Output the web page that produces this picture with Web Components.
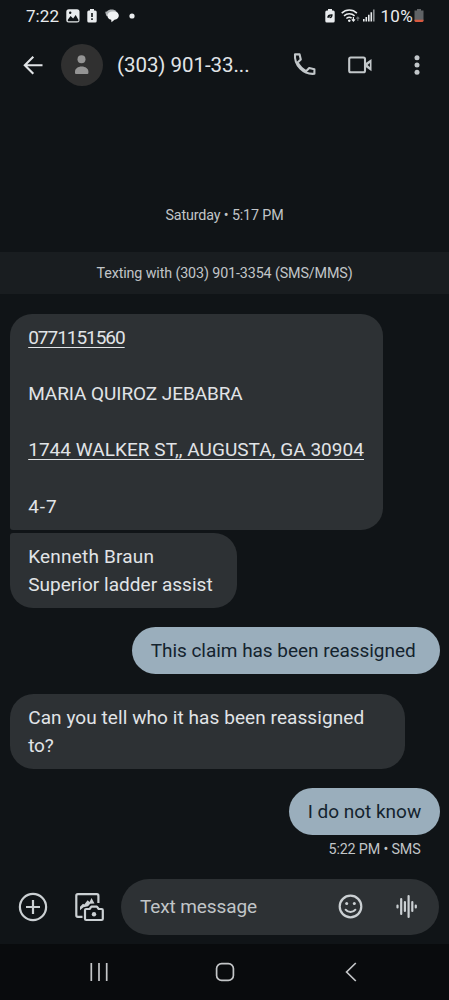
<!DOCTYPE html>
<html lang="en">
<head>
<meta charset="utf-8">
<title>Messages</title>
<style>
html,body{margin:0;padding:0;background:#101417}
body{width:449px;height:1000px;overflow:hidden;font-family:Roboto,"Liberation Sans",sans-serif}
</style>
</head>
<body>
<phone-screen>
  <status-bar slot="top"></status-bar>
  <chat-header slot="top"><fit-text w="132.5">(303) 901-33...</fit-text></chat-header>
  <date-line><fit-text w="118">Saturday • 5:17 PM</fit-text></date-line>
  <info-band><fit-text w="256">Texting with (303) 901-3354 (SMS/MMS)</fit-text></info-band>
  <chat-bubble style="--w:373px;--r:22px 22px 22px 3px;--mt:19.6px">
    <fit-text w="96.5" link>0771151560</fit-text><br><br>
    <fit-text w="214.5">MARIA QUIROZ JEBABRA</fit-text><br><br>
    <fit-text w="335.8" link>1744 WALKER ST,, AUGUSTA, GA 30904</fit-text><br><br>
    <fit-text w="29.5">4-7</fit-text>
  </chat-bubble>
  <chat-bubble style="--w:227px;--r:3px 23px 23px 23px;--mt:2.8px">
    <fit-text w="126">Kenneth Braun</fit-text><br>
    <fit-text w="184.5">Superior ladder assist</fit-text>
  </chat-bubble>
  <chat-bubble out style="--w:307.5px;--mt:19px"><fit-text w="265">This claim has been reassigned</fit-text></chat-bubble>
  <chat-bubble style="--w:395.5px;--mt:19.2px">
    <fit-text w="336">Can you tell who it has been reassigned</fit-text><br>
    <fit-text w="25.5">to?</fit-text>
  </chat-bubble>
  <chat-bubble out style="--w:150.5px;--mt:19.2px"><fit-text w="113.5">I do not know</fit-text></chat-bubble>
  <sent-meta><fit-text w="92">5:22 PM • SMS</fit-text></sent-meta>
  <compose-bar slot="bottom"><fit-text w="117">Text message</fit-text></compose-bar>
  <nav-bar slot="bottom"></nav-bar>
</phone-screen>
<script>
const define = (name, html, extra) => customElements.define(name, class extends HTMLElement {
  constructor() {
    super();
    const t = document.createElement('template');
    t.innerHTML = html;
    this.attachShadow({mode: 'open'}).append(t.content.cloneNode(true));
  }
  connectedCallback() { if (extra) extra(this); }
});

define('phone-screen', `<style>
:host{display:flex;flex-direction:column;width:449px;height:1000px;background:#101417;color:#e1e4e7}
main{flex:1;min-height:0;display:flex;flex-direction:column}
</style><slot name="top"></slot><main><slot></slot></main><slot name="bottom"></slot>`);

define('status-bar', `<style>
:host{display:flex;align-items:center;height:31px;box-sizing:border-box;padding:0 25px 0 26px;font-size:17px;color:#e9ecee}
svg{display:block;flex:none}
.g{flex:1}
</style>
<fit-text w="33">7:22</fit-text>
<svg style="margin-left:7px" width="14" height="14" viewBox="0 0 14 14"><rect x=".3" y=".3" width="13.2" height="13.2" rx="2.5" fill="#e9ecee"/><path d="M1.8 10.7 4.6 7l2.5 2.4 2.6-3.5 2.7 4.8v1.5H1.8z" fill="#101417"/><circle cx="4.2" cy="3.7" r="1.2" fill="#101417"/></svg>
<svg style="margin-left:7px" width="10" height="14" viewBox="0 0 10 14"><path d="M3 0h4v1.4h1.2q1.5 0 1.5 1.5v9q0 1.6-1.5 1.6H1.8Q.3 13.5.3 11.9v-9q0-1.5 1.5-1.5H3z" fill="#e9ecee"/><path d="M4.2 4h1.6v4H4.2zM4.2 9.3h1.6v1.6H4.2z" fill="#101417"/></svg>
<svg style="margin-left:8px" width="15" height="14" viewBox="0 0 15 14"><path d="M1.8 7.2C.8 5.8.5 4.3.3 2.7L2 2.4C4 0 9 0 11.5 2.2L8 5z" fill="#aeb2b5"/><path d="M7 2.400h2.300c6 0 6 8.200.2 8.300L6.500 13.200 6.200 10.700C.8 9.800 1.200 2.700 7 2.400z" fill="#f1f3f4"/></svg>
<svg style="margin-left:9px" width="6" height="6"><circle cx="3" cy="3" r="2.6" fill="#e9ecee"/></svg>
<span class="g"></span>
<svg width="10" height="14" viewBox="0 0 10 14"><path d="M3 0h4v1.4h1.2q1.500 0 1.500 1.500v9q0 1.600-1.500 1.600H1.800Q.3 13.500.3 11.900v-9q0-1.500 1.500-1.500H3z" fill="#e9ecee"/><path d="M2.300 8.800C2 6 4 5 7.600 5.200c.2 3.200-1.500 4.500-3.600 3.900z" fill="#101417"/><path d="M2.300 10.300 6 6.800" stroke="#e9ecee" stroke-width=".6"/></svg>
<svg style="margin-left:6px" width="19" height="14" viewBox="0 0 19 14"><g fill="none" stroke="#e9ecee" stroke-width="1.5"><path d="M.7 4.1C5-.1 11.6-.1 15.9 4.1M3 6.9c3.1-2.8 7.5-2.8 10.6 0M5.4 9.5c1.8-1.4 3.8-1.4 5.2-.3"/></g><path d="M8.3 10.4a1.3 1.3 0 1 1-.02 0z" fill="#e9ecee"/><path d="M12.4 8v3.6m-1.6-1.3 1.6 1.7 1.6-1.7" fill="none" stroke="#e9ecee" stroke-width="1.2"/><path d="M16.8 12V8.3m-1.5 1.4 1.5-1.6 1.5 1.6" fill="none" stroke="#666b6e" stroke-width="1.2"/></svg>
<svg style="margin-left:3px" width="12" height="13" viewBox="0 0 12 13"><path d="M0 10h1.6v2.5H0zM2.5 8h1.6v4.5H2.5zM5 5.7h1.6v6.8H5zM7.5 3.2h1.6v9.3H7.5z" fill="#e9ecee"/><path d="M10 .5h1.6v12H10z" fill="#8b8f92"/></svg>
<fit-text style="margin-left:5.500px" w="32.500">10%</fit-text>
<svg style="margin-left:1px" width="10" height="14" viewBox="0 0 10 14"><path d="M3 0h4v1.5h2.5v10.2H.5V1.5H3z" fill="#606366"/><path d="M.5 10.7h9v.8q0 1.5-1.4 1.5H1.9Q.5 13 .5 11.5z" fill="#d9593f"/></svg>`);

define('chat-header', `<style>
:host{display:flex;align-items:center;height:67px;margin-bottom:-1px;box-sizing:border-box;padding:0 29.500px 0 22px;font-size:20.500px;color:#e1e4e7}
svg{display:block;flex:none}
.av{width:42px;height:42px;border-radius:50%;background:#303030;margin:0 14px 0 17px;display:grid;place-items:center}
.g{flex:1}
</style>
<svg width="22" height="20" viewBox="0 0 22 20" fill="none" stroke="#e1e4e7" stroke-width="2.1"><path d="M20.5 10.3H3M11.3 1.8 2.8 10.3l8.5 8.5"/></svg>
<span class="av"><svg width="42" height="42" fill="#949494"><circle cx="20.5" cy="15.2" r="4"/><path d="M14 29v-1.300c0-3 3-5.200 6.700-5.200s6.700 2.200 6.700 5.200V29q0 1-1 1H15q-1 0-1-1z"/></svg></span>
<slot></slot><span class="g"></span>
<svg width="23" height="23" viewBox="0 0 23 23" fill="none" stroke="#c2c7ca" stroke-width="2.1" stroke-linejoin="round"><path d="M2 1.4h4.6l1.2 5.1-3.2 3.1C6.500 13.300 9.400 16.200 13.100 18.200l3.100-3.200 5.200 1.200v4.600C10.500 21.800 1 12.300 2 1.400z"/></svg>
<svg style="margin-left:32px" width="24" height="18" viewBox="0 0 24 18"><rect x="1.2" y="1.500" width="15.8" height="14.800" rx="1.500" fill="none" stroke="#c2c7ca" stroke-width="2.1"/><path d="M17 7.500 23.500 3v12.200L17 10.500z" fill="#c2c7ca"/><path d="m19.600 9 2.300-2v4z" fill="#101417"/></svg>
<svg style="margin-left:42px" width="6" height="20" fill="#c2c7ca"><circle cx="3" cy="2.800" r="2.500"/><circle cx="3" cy="10" r="2.500"/><circle cx="3" cy="17.200" r="2.500"/></svg>`);

define('date-line', `<style>:host{display:flex;justify-content:center;padding-top:108.500px;height:46.500px;line-height:18px;font-size:14.300px;color:#c1c5c8}</style><slot></slot>`);
define('info-band', `<style>:host{display:flex;justify-content:center;align-items:center;height:42px;background:#191d20;font-size:14.300px;color:#c1c5c8}</style><slot></slot>`);

define('chat-bubble', `<style>
:host{display:block;flex:none;box-sizing:border-box;width:var(--w);margin:var(--mt) 9.5px 0;padding:10px 18.700px 9px;border-radius:var(--r,23.700px);background:#2d3134;color:#e1e4e7;font-size:19px;line-height:28.200px}
:host([out]){align-self:flex-end;background:#9aaebc;color:#14232e}
</style><slot></slot>`);

define('sent-meta', `<style>:host{display:flex;justify-content:flex-end;padding:5px 28.500px 0;line-height:18px;font-size:14.300px;color:#c1c5c8}</style><slot></slot>`);

define('compose-bar', `<style>
:host{display:flex;align-items:center;height:66px;box-sizing:border-box;padding:.500px 10px 9.500px 18px;font-size:19px;color:#c1c5c8}
svg{display:block;flex:none}
.field{margin-left:17px;flex:1;height:56px;border-radius:28px;background:#2d3134;display:flex;align-items:center;box-sizing:border-box;padding:0 21.500px 0 19px}
.g{flex:1}
</style>
<svg width="30" height="30" viewBox="0 0 30 30" fill="none" stroke="#cbd0d3" stroke-width="2.2"><circle cx="15" cy="15" r="13.100"/><path d="M15 8v14M8 15h14"/></svg>
<svg style="margin-left:26px" width="30" height="30" viewBox="0 0 30 30" fill="none" stroke="#cbd0d3" stroke-width="2.200" stroke-linejoin="round"><path d="M24.400 11V3.700Q24.400 2.200 22.900 2.200H3.800Q2.300 2.200 2.300 3.700V23.300Q2.300 24.800 3.800 24.800H8.500"/><path d="M6 18.300v-3.500l3-3 1.300.8 3.300-4.400 2 1.800L17.500 6l3 5.500-4.300.2-2.200 2.500-4.500 1z" fill="#cbd0d3" stroke="none"/><path d="M12 17h3.600l1.800-2.400h5.500L24.700 17h2.900q1.200 0 1.200 1.200v8.600q0 1.200-1.200 1.200H12.200q-1.200 0-1.200-1.200V18.200Q11 17 12.200 17z"/><circle cx="20" cy="22.200" r="2.200" fill="#cbd0d3" stroke="none"/></svg>
<div class="field"><slot></slot><span class="g"></span>
<svg width="25" height="25" viewBox="0 0 25 25" fill="none" stroke="#cbd0d3" stroke-width="2.200"><circle cx="12.500" cy="12.500" r="10.800"/><path d="M7.600 15.700c2.400 3.100 7.400 3.100 9.800 0" stroke-linecap="round" stroke-width="2"/><g fill="#cbd0d3" stroke="none"><circle cx="8.700" cy="9.500" r="1.500"/><circle cx="16.300" cy="9.500" r="1.500"/></g></svg>
<svg style="margin-left:32px" width="23" height="25" viewBox="0 0 23 25" fill="none" stroke="#cbd0d3" stroke-width="2.200" stroke-linecap="round"><path d="M2.500 11.500v2M6.200 5v15M9.900 8v9M13.600 2v21M17.300 8v9M20.800 11.500v2"/></svg>
</div>`);

define('nav-bar', `<style>
:host{display:grid;grid-template-columns:repeat(3,1fr);justify-items:center;width:378px;padding:0 35px 0 36px;height:56px;background:#090b0d}
svg{display:block;align-self:center}
</style>
<svg width="18" height="20" stroke="#c4c6c8" stroke-width="1.700"><path d="M1.300 1v18M9 1v18M16.700 1v18"/></svg>
<svg width="20" height="20" fill="none" stroke="#c4c6c8" stroke-width="1.700"><rect x="1.600" y="1.600" width="16.800" height="16.800" rx="5"/></svg>
<svg width="12" height="20" fill="none" stroke="#c4c6c8" stroke-width="1.700"><path d="M10.800 1 1.600 10l9.200 9"/></svg>`);

// One line of text tracked to the width given in its "w" attribute.
define('fit-text', `<style>
:host{display:inline-block;white-space:nowrap}
:host([link]) span{text-decoration:underline;text-decoration-thickness:1.400px;text-underline-offset:2.600px;text-decoration-skip-ink:none}
</style><span><slot></slot></span>`, el => {
  const span = el.shadowRoot.querySelector('span');
  const target = parseFloat(el.getAttribute('w'));
  const gap = (target - span.getBoundingClientRect().width) / el.textContent.length;
  el.style.width = target + 'px';
  span.style.letterSpacing = gap.toFixed(3) + 'px';
});
</script>
</body>
</html>
